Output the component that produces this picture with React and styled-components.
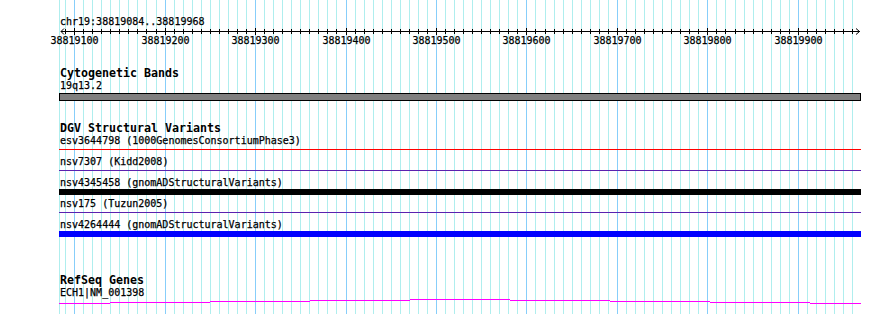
import React from "react"
import styled, { createGlobalStyle } from "styled-components"

const GlobalStyle = createGlobalStyle`
  html, body {
    margin: 0;
    padding: 0;
    background: #fff;
  }
`

const TRACK_LEFT = 59
const TRACK_WIDTH = 802
const MONO = '"DejaVu Sans Mono", "Liberation Mono", monospace'

// base pair -> page x
const bpToX = (bp) => Math.floor(74.6 + (bp - 38819100) * 0.9047)

const gridBps = []
for (let bp = 38819090; bp <= 38819960; bp += 10) gridBps.push(bp)

const variants = [
    { name: "esv3644798", source: "1000GenomesConsortiumPhase3", color: "#ff0000", thin: true },
    { name: "nsv7307", source: "Kidd2008", color: "#5a22b0", thin: true },
    { name: "nsv4345458", source: "gnomADStructuralVariants", color: "#000000", thin: false },
    { name: "nsv175", source: "Tuzun2005", color: "#5a22b0", thin: true },
    { name: "nsv4264444", source: "gnomADStructuralVariants", color: "#0000ff", thin: false },
]

// gene model segments: [x0, x1, row] in page coords
const geneSegments = [
    [59, 110, 303], [110, 210, 302], [210, 310, 301], [310, 410, 300], [410, 510, 299],
    [510, 610, 300], [610, 710, 301], [710, 810, 302], [810, 861, 303],
]

const Panel = styled.div`
    position: relative;
    width: 890px;
    height: 314px;
    overflow: hidden;
    background: #fff;
    color: #000;
    font-family: ${MONO};
`

const GridLayer = styled.svg`
    position: absolute;
    top: 0;
    left: 0;
`

const Tracks = styled.div`
    position: relative;
    width: ${TRACK_WIDTH}px;
    margin-left: ${TRACK_LEFT}px;
    padding-top: 15px;
    display: flex;
    flex-direction: column;
`

const Label = styled.div`
    height: 13px;
    line-height: 13px;
    font-size: 10px;
    padding-left: 1px;
    white-space: nowrap;
    -webkit-text-stroke: 0.25px #000;
`

const Title = styled.div`
    height: 13px;
    line-height: 15px;
    font-size: 11.63px;
    font-weight: bold;
    padding-left: 1px;
    white-space: nowrap;
    margin-top: ${p => p.$gap}px;
`

const Ruler = styled.svg`
    display: block;
    overflow: visible;

    text {
        font-family: ${MONO};
        font-size: 10px;
        stroke: #000;
        stroke-width: 0.25px;
    }
`

const Band = styled.div`
    box-sizing: border-box;
    height: 8px;
    margin-top: 1px;
    border: 1px solid #000;
    background: #808080;
`

const Glyph = styled.div`
    height: ${p => (p.$thin ? "1px" : "6px")};
    margin: ${p => (p.$thin ? "2px 0 5px" : "0 0 2px")};
    background: ${p => p.$color};
`

const GeneModel = styled.svg`
    display: block;
`

const Grid = () => (
    <GridLayer width="890" height="314" shapeRendering="crispEdges">
        <line x1={TRACK_LEFT + 0.5} x2={TRACK_LEFT + 0.5} y1="0" y2="314" stroke="#afeeee" />
        {gridBps.map(bp => {
            const x = bpToX(bp) + 0.5
            const major = bp % 100 === 0
            return <line key={bp} x1={x} x2={x} y1="0" y2="314" stroke={major ? "#87cefa" : "#afeeee"} />
        })}
    </GridLayer>
)

const RulerBar = () => (
    <Ruler width={TRACK_WIDTH} height="20">
        <g shapeRendering="crispEdges" stroke="#000">
            <line x1="2" x2="801" y1="3.5" y2="3.5" />
            {gridBps.map(bp => {
                const x = bpToX(bp) - TRACK_LEFT + 0.5
                const major = bp % 100 === 0
                return <line key={bp} x1={x} x2={x} y1={major ? 0 : 1} y2={major ? 7 : 6} />
            })}
        </g>
        <polyline points="5,0.5 2,3.5 5,6.5" fill="none" stroke="#000" />
        <polyline points="797,0.5 800.5,3.5 797,6.5" fill="none" stroke="#000" />
        {gridBps.filter(bp => bp % 100 === 0).map(bp => (
            <text key={bp} x={bpToX(bp) - TRACK_LEFT + 0.5} y="16" textAnchor="middle">{bp}</text>
        ))}
    </Ruler>
)

export default function App() {
    return (
        <Panel>
            <GlobalStyle />
            <Grid />
            <Tracks>
                <Label>chr19:38819084..38819968</Label>
                <RulerBar />

                <Title $gap={18}>Cytogenetic Bands</Title>
                <Label>19q13.2</Label>
                <Band />

                <Title $gap={20}>DGV Structural Variants</Title>
                {variants.map(v => (
                    <React.Fragment key={v.name}>
                        <Label>{v.name} ({v.source})</Label>
                        <Glyph $thin={v.thin} $color={v.color} />
                    </React.Fragment>
                ))}

                <Title $gap={34}>RefSeq Genes</Title>
                <Label>ECH1|NM_001398</Label>
                <GeneModel width={TRACK_WIDTH} height="6" shapeRendering="crispEdges">
                    {geneSegments.map(([x0, x1, row]) => (
                        <rect key={x0} x={x0 - TRACK_LEFT} y={row - 299} width={x1 - x0} height="1" fill="#ff00ff" />
                    ))}
                </GeneModel>
            </Tracks>
        </Panel>
    )
}
